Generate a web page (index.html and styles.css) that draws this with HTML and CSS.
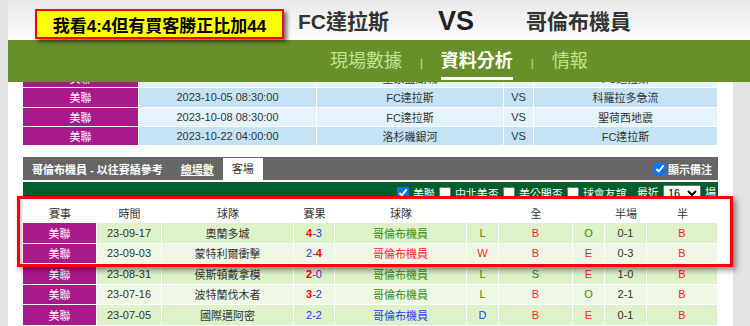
FILE: index.html
```html
<!DOCTYPE html>
<html lang="zh-Hant">
<head>
    <meta charset="UTF-8">
    <meta name="viewport" content="width=device-width, initial-scale=1.0">
    <title>FC達拉斯 VS 哥倫布機員 - 資料分析</title>
    <link rel="stylesheet" href="styles.css">
</head>
<body>
    <div class="topbar">
        <div class="match-head">
            <div class="note">我看4:4但有買客勝正比加44</div>
            <span class="team">FC達拉斯</span>
            <span class="vs">VS</span>
            <span class="team">哥倫布機員</span>
        </div>
        <nav class="tabs">
            <a>現場數據</a><span class="sep">|</span><a class="active">資料分析</a><span class="sep">|</span><a>情報</a>
        </nav>
    </div>

    <main class="page">
        <table class="fixtures">
            <colgroup>
                <col style="width:116px"><col style="width:178px"><col style="width:187px"><col style="width:30px"><col style="width:184px">
            </colgroup>
            <tr class="light"><td class="league">美聯</td><td>2023-10-01 10:30:00</td><td>皇家鹽湖城</td><td>VS</td><td>FC達拉斯</td></tr>
            <tr class="dark"><td class="league">美聯</td><td>2023-10-05 08:30:00</td><td>FC達拉斯</td><td>VS</td><td>科羅拉多急流</td></tr>
            <tr class="light"><td class="league">美聯</td><td>2023-10-08 08:30:00</td><td>FC達拉斯</td><td>VS</td><td>聖荷西地震</td></tr>
            <tr class="dark"><td class="league">美聯</td><td>2023-10-22 04:00:00</td><td>洛杉磯銀河</td><td>VS</td><td>FC達拉斯</td></tr>
        </table>

        <section class="history">
            <div class="history-head">
                <span class="title">哥倫布機員 - 以往賽績參考</span>
                <a class="count">總場數</a>
                <span class="tab">客場</span>
                <label class="show-note"><input type="checkbox" checked>顯示備注</label>
            </div>
            <div class="filters">
                <label><input type="checkbox" checked>美聯</label>
                <label><input type="checkbox">中北美盃</label>
                <label><input type="checkbox">美公開盃</label>
                <label><input type="checkbox">球會友誼</label>
                <span class="recent">最近 <select><option>16</option></select> 場</span>
            </div>

            <div class="highlight">
                <table class="records">
                    <colgroup>
                        <col style="width:74px"><col style="width:65px"><col style="width:132px"><col style="width:41px"><col style="width:132px"><col style="width:32px"><col style="width:74px"><col style="width:32px"><col style="width:42px"><col style="width:71px">
                    </colgroup>
                    <tr class="head">
                        <th>賽事</th><th>時間</th><th>球隊</th><th>賽果</th><th>球隊</th><th colspan="3">全</th><th>半場</th><th>半</th>
                    </tr>
                    <tr class="dark">
                        <td class="league">美聯</td><td>23-09-17</td><td>奧蘭多城</td>
                        <td><b class="win">4</b><span class="lose">-3</span></td>
                        <td class="green">哥倫布機員</td><td class="green">L</td><td class="red">B</td><td class="green">O</td><td>0-1</td><td class="red">B</td>
                    </tr>
                    <tr class="light">
                        <td class="league">美聯</td><td>23-09-03</td><td>蒙特利爾衝擊</td>
                        <td><span class="lose">2-</span><b class="win">4</b></td>
                        <td class="red">哥倫布機員</td><td class="red">W</td><td class="red">B</td><td class="red">E</td><td>0-3</td><td class="red">B</td>
                    </tr>
                </table>
            </div>

            <table class="records">
                <colgroup>
                    <col style="width:74px"><col style="width:65px"><col style="width:132px"><col style="width:41px"><col style="width:132px"><col style="width:32px"><col style="width:74px"><col style="width:32px"><col style="width:42px"><col style="width:71px">
                </colgroup>
                <tr class="dark">
                    <td class="league">美聯</td><td>23-08-31</td><td>侯斯頓戴拿模</td>
                    <td><b class="win">2</b><span class="lose">-0</span></td>
                    <td class="green">哥倫布機員</td><td class="green">L</td><td class="deep">S</td><td class="red">E</td><td>1-0</td><td class="red">B</td>
                </tr>
                <tr class="light">
                    <td class="league">美聯</td><td>23-07-16</td><td>波特蘭伐木者</td>
                    <td><b class="win">3</b><span class="lose">-2</span></td>
                    <td class="green">哥倫布機員</td><td class="green">L</td><td class="red">B</td><td class="green">O</td><td>2-1</td><td class="red">B</td>
                </tr>
                <tr class="dark">
                    <td class="league">美聯</td><td>23-07-05</td><td>國際邁阿密</td>
                    <td><span class="lose">2-2</span></td>
                    <td class="blue">哥倫布機員</td><td class="blue">D</td><td class="red">B</td><td class="red">E</td><td>0-1</td><td class="red">B</td>
                </tr>
            </table>
        </section>
    </main>
</body>
</html>
```

FILE: styles.css
```css
body {
    margin: 0;
    background-color: #e3e3e3;
    font-family: "Liberation Sans", "Noto Sans CJK TC", sans-serif;
    font-size: 11px;
    color: #333;
}

/* fixed match header */
.topbar {
    position: fixed;
    top: 0;
    left: 8px;
    right: 0;
    z-index: 5;
}
.match-head {
    height: 40px;
    background: linear-gradient(#e8e8e8, #ffffff);
    display: flex;
    align-items: center;
    padding-left: 290px;
}
.team {
    font-size: 21px;
    font-weight: bold;
    color: #333;
}
.vs {
    font-size: 27px;
    font-weight: bold;
    color: #222;
    margin: 3px 52px 0 49px;
}
.note {
    position: absolute;
    left: 27px;
    top: 9px;
    width: 249px;
    height: 30px;
    box-sizing: border-box;
    border: 2px solid #ff0000;
    background-color: #ffff00;
    color: #000;
    font-size: 17px;
    font-weight: bold;
    display: flex;
    align-items: center;
    justify-content: center;
    box-shadow: 3px 3px 4px rgba(0,0,0,0.55);
}
.tabs {
    height: 42px;
    background-color: #678f2a;
    display: flex;
    align-items: center;
    padding-left: 322px;
}
.tabs a {
    position: relative;
    font-size: 18px;
    line-height: 42px;
    color: #bfe58f;
}
.tabs a.active {
    color: #fff;
    font-weight: bold;
}
.tabs a.active::after {
    content: "";
    position: absolute;
    left: 0;
    right: 0;
    bottom: 2px;
    height: 3px;
    background-color: #fff;
}
.sep {
    font-size: 11px;
    color: #c9e6a0;
    margin: 4px 18px 0 18px;
}

/* page content */
.page {
    margin-left: 8px;
    width: 725px;
    min-height: 100vh;
    box-sizing: border-box;
    padding: 69px 15px 20px;
    background-color: #fff;
}
table {
    border-collapse: separate;
    border-spacing: 0;
    table-layout: fixed;
    width: 695px;
}
td, th {
    padding: 0;
    text-align: center;
    white-space: nowrap;
    overflow: hidden;
}
.fixtures td {
    height: 18.3px;
    border-right: 1px solid #fff;
    border-bottom: 1px solid #fff;
}
.fixtures tr.light td {
    background-color: #e5f3fc;
}
.fixtures tr.dark td {
    background-color: #c6e3f5;
}
td.league, .fixtures tr td.league {
    background-color: #a8198b;
    color: #fff;
}

.history {
    margin-top: 11px;
}
.history-head {
    height: 23px;
    background-color: #666;
    color: #fff;
    font-weight: bold;
    display: flex;
    align-items: center;
    padding-left: 9px;
}
.count {
    margin-left: 18px;
    text-decoration: underline;
}
.tab {
    align-self: flex-end;
    height: 22px;
    line-height: 22px;
    margin-left: 9px;
    padding: 0 9px;
    background-color: #fff;
    color: #333;
    font-weight: normal;
}
.show-note {
    margin-left: auto;
    margin-right: 6px;
    display: flex;
    align-items: center;
}
input[type="checkbox"] {
    width: 12px;
    height: 12px;
    margin: 0 2px 0 0;
}
.filters {
    margin-top: 2px;
    height: 22px;
    background-color: #005e2c;
    color: #fff;
    display: flex;
    justify-content: flex-end;
    align-items: center;
    gap: 4px;
    padding-right: 2px;
}
.filters label {
    display: flex;
    align-items: center;
}
.filters label input {
    margin-right: 4px;
}
.recent {
    margin-left: 6px;
}
.recent select {
    width: 38px;
    height: 17px;
    font-size: 11px;
    padding: 0;
    margin: 0 1px;
}

/* highlighted first rows */
.highlight {
    position: relative;
    z-index: 1;
    margin: -8px -15px -3px -6px;
    padding: 4px 12px 0 3px;
    border: 3px solid #ff0000;
    background-color: #fff;
    box-shadow: 3px 3px 6px rgba(0,0,0,0.45), inset 3px 0 3px -1px rgba(0,0,0,0.2);
}
.records th {
    height: 20px;
    font-weight: normal;
    color: #333;
    background-color: #fff;
}
.records td {
    height: 19.5px;
    border-right: 1px solid #fff;
    border-bottom: 1px solid #fff;
}
.records tr.dark td {
    background-color: #ddf2c9;
}
.records tr.light td {
    background-color: #eef8e4;
}
.records tr td.league {
    background-color: #a8198b;
    color: #fff;
}
.win {
    color: #ff0000;
}
.lose {
    color: #3333dd;
}
.green {
    color: #3a8c0a;
}
.deep {
    color: #16803a;
}
.red {
    color: #ff1a33;
}
.blue {
    color: #3333ff;
}
```
